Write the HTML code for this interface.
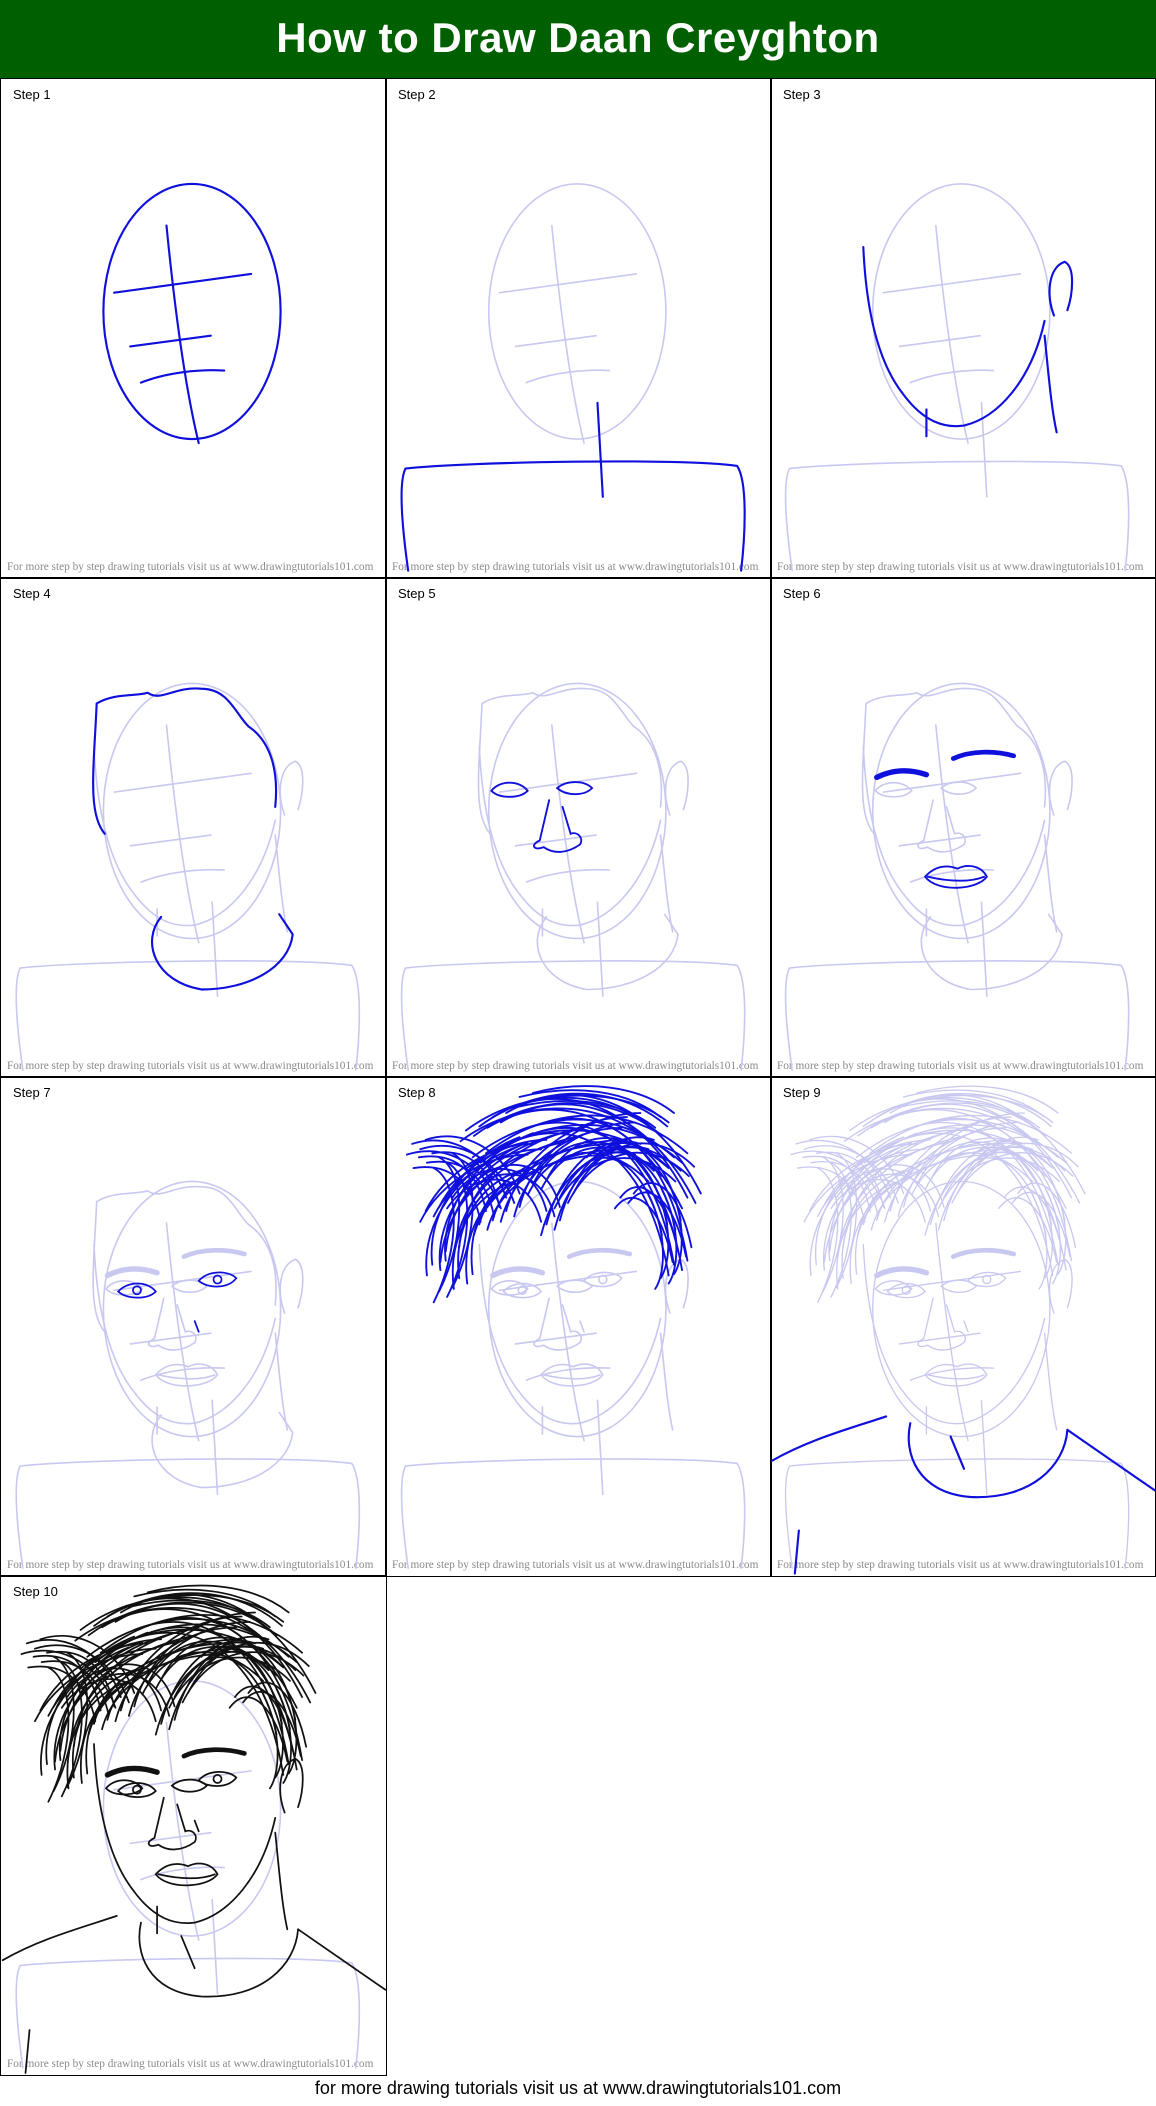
<!DOCTYPE html>
<html><head><meta charset="utf-8">
<style>
html,body{margin:0;padding:0;background:#fff;}
body{width:1156px;height:2106px;position:relative;overflow:hidden;font-family:"Liberation Sans",sans-serif;}
#hdr{position:absolute;left:0;top:0;width:1156px;height:79px;background:#006000;color:#fff;font-weight:bold;font-size:42px;text-align:center;line-height:76px;letter-spacing:0.5px;}
.cell{position:absolute;box-sizing:border-box;border:1.5px solid #000;}
.lbl{position:absolute;font-size:13px;color:#000;}
.wm{position:absolute;font-family:"Liberation Serif",serif;font-size:11.3px;color:#8a8a8a;white-space:nowrap;}
#foot{position:absolute;left:0;width:1156px;top:2078px;text-align:center;font-size:18px;color:#000;}
svg{position:absolute;left:0;top:0;}
</style></head><body>
<div id="hdr">How to Draw Daan Creyghton</div>

<div class="cell" style="left:0;top:78px;width:387px;height:501px"></div>
<div class="cell" style="left:385px;top:78px;width:387px;height:501px"></div>
<div class="cell" style="left:770px;top:78px;width:386px;height:501px"></div>
<div class="cell" style="left:0;top:577px;width:387px;height:501px"></div>
<div class="cell" style="left:385px;top:577px;width:387px;height:501px"></div>
<div class="cell" style="left:770px;top:577px;width:386px;height:501px"></div>
<div class="cell" style="left:0;top:1076px;width:387px;height:501px"></div>
<div class="cell" style="left:385px;top:1076px;width:387px;height:501px"></div>
<div class="cell" style="left:770px;top:1076px;width:386px;height:501px"></div>
<div class="cell" style="left:0;top:1575px;width:387px;height:501px"></div>

<div class="lbl" style="left:13px;top:87px">Step 1</div>
<div class="lbl" style="left:398px;top:87px">Step 2</div>
<div class="lbl" style="left:783px;top:87px">Step 3</div>
<div class="lbl" style="left:13px;top:586px">Step 4</div>
<div class="lbl" style="left:398px;top:586px">Step 5</div>
<div class="lbl" style="left:783px;top:586px">Step 6</div>
<div class="lbl" style="left:13px;top:1085px">Step 7</div>
<div class="lbl" style="left:398px;top:1085px">Step 8</div>
<div class="lbl" style="left:783px;top:1085px">Step 9</div>
<div class="lbl" style="left:13px;top:1584px">Step 10</div>

<div class="wm" style="left:7px;top:561px">For more step by step drawing tutorials visit us at www.drawingtutorials101.com</div>
<div class="wm" style="left:392px;top:561px">For more step by step drawing tutorials visit us at www.drawingtutorials101.com</div>
<div class="wm" style="left:777px;top:561px">For more step by step drawing tutorials visit us at www.drawingtutorials101.com</div>
<div class="wm" style="left:7px;top:1060px">For more step by step drawing tutorials visit us at www.drawingtutorials101.com</div>
<div class="wm" style="left:392px;top:1060px">For more step by step drawing tutorials visit us at www.drawingtutorials101.com</div>
<div class="wm" style="left:777px;top:1060px">For more step by step drawing tutorials visit us at www.drawingtutorials101.com</div>
<div class="wm" style="left:7px;top:1559px">For more step by step drawing tutorials visit us at www.drawingtutorials101.com</div>
<div class="wm" style="left:392px;top:1559px">For more step by step drawing tutorials visit us at www.drawingtutorials101.com</div>
<div class="wm" style="left:777px;top:1559px">For more step by step drawing tutorials visit us at www.drawingtutorials101.com</div>
<div class="wm" style="left:7px;top:2058px">For more step by step drawing tutorials visit us at www.drawingtutorials101.com</div>

<div id="foot">for more drawing tutorials visit us at www.drawingtutorials101.com</div>

<svg width="1156" height="2106" viewBox="0 0 861 1568.6" preserveAspectRatio="none" fill="none" stroke-linecap="round">
<defs>
<g id="b1">
<ellipse cx="143" cy="173" rx="66" ry="95"/>
<path d="M124 109 C130 170 138 230 148 271"/>
<path d="M85 159 L187 145"/>
<path d="M97 199 L157 191"/>
<path d="M105 226 C125 218 150 216 167 217"/>
</g>
<g id="b2">
<path d="M17 366 C12 330 10 300 15 290 C60 285 220 282 262 288 C270 300 268 340 265 366"/>
<path d="M158 241 L162 311"/>
</g>
<g id="b3">
<path d="M70 125 C72 170 80 210 100 235 C115 255 130 260 145 258 C170 252 195 225 205 180"/>
<path d="M212 176 C206 160 208 140 220 136 C228 140 226 160 222 172"/>
<path d="M117 246 L117 266"/>
<path d="M205 191 C208 220 210 245 214 263"/>
</g>
<g id="b4">
<path d="M78 190 C65 175 70 140 72 93 C85 85 100 88 110 85 C120 92 130 80 150 82 C170 82 175 100 185 110 C200 120 208 140 205 170"/>
<path d="M120 252 C105 270 115 300 150 306 C185 306 215 290 218 265 L208 250"/>
</g>
<g id="b5">
<path d="M79 158 C85 150 100 150 106 158 C100 164 85 164 79 158 Z"/>
<path d="M128 156 C135 150 148 150 154 156 C148 162 135 162 128 156 Z"/>
<path d="M122 165 L115 195 C108 198 110 203 118 200 C125 205 135 205 145 198 C148 193 143 188 138 190 L132 170"/>
</g>
<g id="b6">
<path d="M80 148 C92 142 105 142 117 146" stroke-width="4"/>
<path d="M137 134 C150 128 168 128 182 132" stroke-width="3.5"/>
<path d="M116 222 C125 212 135 214 140 216 C148 212 158 214 162 222 C155 232 125 234 116 222 Z"/>
<path d="M118 222 C135 226 150 226 160 222"/>
</g>
<g id="b7">
<path d="M88 160 C95 152 110 152 116 160 C110 166 95 166 88 160 Z"/>
<circle cx="102" cy="159" r="3"/>
<path d="M148 152 C155 144 170 144 176 150 C170 158 155 158 148 152 Z"/>
<circle cx="162" cy="151" r="3"/>
<path d="M145 182 L148 190"/>
</g>
<g id="h">
<path d="M20 50 C50 40 80 60 90 90"/>
<path d="M40 60 C60 70 60 120 40 160"/>
<path d="M60 40 C100 10 160 5 200 40"/>
<path d="M80 30 C130 0 190 20 225 90"/>
<path d="M100 40 C150 20 200 50 215 140"/>
<path d="M50 90 C70 60 110 60 120 100"/>
<path d="M45 130 C50 80 90 50 140 40"/>
<path d="M110 80 C130 40 170 40 200 70"/>
<path d="M150 60 C170 40 200 60 210 110"/>
<path d="M30 100 C45 70 80 50 110 50"/>
<path d="M200 80 C215 110 212 140 205 150"/>
<path d="M70 110 C80 70 130 50 170 50"/>
<path d="M120 110 C130 70 160 40 190 50"/>
<path d="M35 140 C30 100 60 60 100 45"/>
<path d="M55 150 C50 110 70 80 100 70"/>
<path d="M90 100 C100 60 140 30 180 30"/>
<path d="M130 90 C150 50 190 40 220 70"/>
<path d="M25 60 C55 55 70 75 75 100"/>
<path d="M175 90 C190 70 210 90 218 130"/>
<path d="M65 60 C110 25 170 20 215 60"/>
<path d="M100 15 C140 5 180 10 205 30"/>
</g>
<g id="b8">
<use href="#h"/>
<use href="#h" transform="translate(6,4)"/>
<use href="#h" transform="translate(-4,8)"/>
<use href="#h" transform="translate(10,-3)"/>
</g>
<g id="b9">
<path d="M2 286 C30 270 60 262 87 253"/>
<path d="M105 258 C100 280 110 310 150 313 C195 315 220 290 222 263"/>
<path d="M222 263 L287 308"/>
<path d="M135 268 L145 292"/>
<path d="M22 338 L19 370"/>
</g>
</defs>

<g transform="translate(0,59)" stroke="#1010dd" stroke-width="1.6"><use href="#b1"/></g>
<g transform="translate(287,59)">
<g stroke="#c8c8f0" stroke-width="1.2"><use href="#b1"/></g>
<g stroke="#1010dd" stroke-width="1.6"><use href="#b2"/></g>
</g>
<g transform="translate(573,59)">
<g stroke="#c8c8f0" stroke-width="1.2"><use href="#b1"/><use href="#b2"/></g>
<g stroke="#1010dd" stroke-width="1.6"><use href="#b3"/></g>
</g>
<g transform="translate(0,431)">
<g stroke="#c8c8f0" stroke-width="1.2"><use href="#b1"/><use href="#b2"/><use href="#b3"/></g>
<g stroke="#1010dd" stroke-width="1.6"><use href="#b4"/></g>
</g>
<g transform="translate(287,431)">
<g stroke="#c8c8f0" stroke-width="1.2"><use href="#b1"/><use href="#b2"/><use href="#b3"/><use href="#b4"/></g>
<g stroke="#1010dd" stroke-width="1.4"><use href="#b5"/></g>
</g>
<g transform="translate(573,431)">
<g stroke="#c8c8f0" stroke-width="1.2"><use href="#b1"/><use href="#b2"/><use href="#b3"/><use href="#b4"/><use href="#b5"/></g>
<g stroke="#1010dd" stroke-width="1.4"><use href="#b6"/></g>
</g>
<g transform="translate(0,802)">
<g stroke="#c8c8f0" stroke-width="1.2"><use href="#b1"/><use href="#b2"/><use href="#b3"/><use href="#b4"/><use href="#b5"/><use href="#b6"/></g>
<g stroke="#1010dd" stroke-width="1.3"><use href="#b7"/></g>
</g>
<g transform="translate(287,802)">
<g stroke="#c8c8f0" stroke-width="1.2"><use href="#b1"/><use href="#b2"/><use href="#b3"/><use href="#b5"/><use href="#b6"/><use href="#b7"/></g>
<g stroke="#1010dd" stroke-width="1.4"><use href="#b8"/></g>
</g>
<g transform="translate(573,802)">
<g stroke="#c8c8f0" stroke-width="1"><use href="#b1"/><use href="#b2"/><use href="#b3"/><use href="#b5"/><use href="#b6"/><use href="#b7"/><use href="#b8"/></g>
<g stroke="#1010dd" stroke-width="1.6"><use href="#b9"/></g>
</g>
<g transform="translate(0,1174)">
<g stroke="#c8c8f0" stroke-width="1.2"><use href="#b1"/><use href="#b2"/></g>
<g stroke="#111" stroke-width="1.3"><use href="#b3"/><use href="#b5"/><use href="#b6"/><use href="#b7"/><use href="#b8"/><use href="#b9"/></g>
</g>
</svg>
</body></html>
